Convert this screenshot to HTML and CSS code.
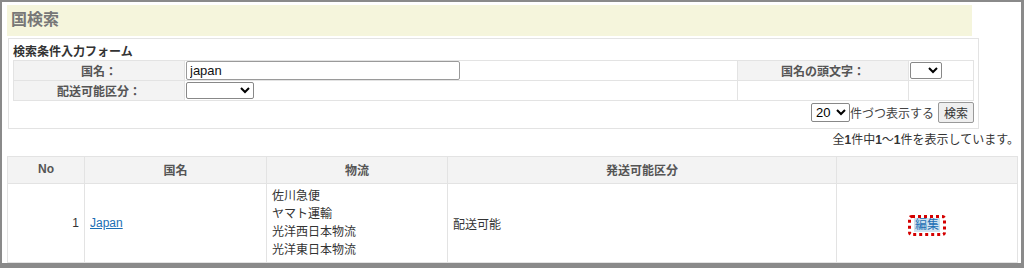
FILE: index.html
```html
<!DOCTYPE html>
<html>
	<head>
		<meta charset="utf-8">
		<title>国検索</title>
		<link rel="stylesheet" href="styles.css">
	</head>
	<body>
		<div id="frame">
			<h1 class="title">国検索</h1>
			<div class="search">
				<p class="caption">検索条件入力フォーム</p>
				<table class="form">
					<tr>
						<th class="label">国名：</th>
						<td class="field"><input type="text" class="name" value="japan"></td>
						<th class="label2">国名の頭文字：</th>
						<td class="field2"><select class="initial"><option></option></select></td>
					</tr>
					<tr>
						<th class="label">配送可能区分：</th>
						<td class="field"><select class="kind"><option></option></select></td>
						<td></td>
						<td></td>
					</tr>
				</table>
				<div class="paging">
					<select class="count"><option>20</option></select><span>件づつ表示する</span><button>検索</button>
				</div>
			</div>
			<p class="summary">全<b>1</b>件中<b>1</b>〜<b>1</b>件を表示しています。</p>
			<table class="result">
				<tr>
					<th class="c-no">No</th>
					<th class="c-name">国名</th>
					<th class="c-dist">物流</th>
					<th class="c-kind">発送可能区分</th>
					<th></th>
				</tr>
				<tr>
					<td class="num">1</td>
					<td><a href="#">Japan</a></td>
					<td class="dist">
						<p>佐川急便</p>
						<p>ヤマト運輸</p>
						<p>光洋西日本物流</p>
						<p>光洋東日本物流</p>
					</td>
					<td>配送可能</td>
					<td class="edit"><a href="#" class="btn-edit"><span>編集</span></a></td>
				</tr>
			</table>
		</div>
	</body>
</html>
```

FILE: styles.css
```css
html,body,p,h1,table{margin: 0; padding: 0;}
body{
	font-family: "Liberation Sans", "Noto Sans CJK JP", sans-serif;
	font-size: 12px;
	color: #333;
	background: #fff;
}
#frame{
	box-sizing: border-box;
	width: 1024px;
	height: 268px;
	border-style: solid;
	border-color: #8a8a8a;
	border-width: 2px 3px 5px 2px;
	padding: 3px 3px 0 5px;
	overflow: hidden;
}
.title{
	width: 965px;
	height: 31px;
	line-height: 30px;
	background: #f5f5dc;
	color: #777;
	font-size: 16px;
	padding-left: 4px;
	box-sizing: border-box;
}
.search{
	box-sizing: border-box;
	width: 971px;
	height: 91px;
	margin: 2px 0 0 1px;
	border: 1px solid #e3e3e3;
	padding: 5px 5px 0 4px;
}
.caption{
	font-weight: bold;
	font-size: 12px;
	height: 16px;
	line-height: 16px;
}
.form{
	width: 961px;
	border-collapse: collapse;
}
.form th,.form td{
	border: 1px solid #e3e3e3;
	padding: 0;
	height: 19px;
}
.form th{
	background: #f3f3f3;
	color: #555;
	font-weight: bold;
}
.label{width: 170px;}
.label2{width: 170px;}
.field2{width: 64px;}
.name{
	box-sizing: border-box;
	width: 274px;
	height: 19px;
	margin: 0 0 0 1px;
	padding: 0 3px;
	font: 13px "Liberation Sans", sans-serif;
	color: #111;
	border: 1px solid #9a9a9a;
	border-radius: 2px;
	vertical-align: middle;
}
select{
	box-sizing: border-box;
	height: 17px;
	margin: 0 0 0 1px;
	font: 13px "Liberation Sans", sans-serif;
	border: 1px solid #888;
	border-radius: 2px;
	background: #fff;
	vertical-align: middle;
}
.kind{width: 68px;}
.initial{width: 32px;}
.paging{
	width: 961px;
	display: flex;
	justify-content: flex-end;
	align-items: center;
	height: 23px;
	font-size: 12px;
	color: #444;
}
.paging .count{
	width: 39px;
	height: 19px;
	margin: 0;
	padding: 0;
}
.paging button{
	box-sizing: border-box;
	height: 21px;
	margin-left: 4px;
	padding: 0 5px;
	font: 12px "Liberation Sans", "Noto Sans CJK JP", sans-serif;
	color: #333;
	background: #efefef;
	border: 1px solid #999;
	border-radius: 2px;
}
.summary{
	text-align: right;
	width: 1012px;
	height: 27px;
	line-height: 23px;
	font-size: 12px;
}
.result{
	width: 1011px;
	border-collapse: collapse;
}
.result th,.result td{
	border: 1px solid #e3e3e3;
	padding: 0 5px;
}
.result th{
	height: 24px;
	background: #f3f3f3;
	color: #555;
	font-weight: bold;
	padding-bottom: 2px;
}
.result td{height: 78px;}
.c-no{width: 66px;}
.c-name{width: 171px;}
.c-dist{width: 170px;}
.c-kind{width: 378px;}
.num{text-align: right;}
.result a{
	color: #1b6fb5;
}
.dist p{
	line-height: 18px;
}
.edit{text-align: center;}
.btn-edit{
	display: inline-block;
	margin-top: 5px;
	text-decoration: none;
	color: #2f7bb3;
	padding: 1px 3px;
	border: 3px dotted #d40000;
	border-radius: 4px;
	line-height: 13px;
}
.btn-edit span{
	background: #cfe2ef;
	padding: 0 1px;
}
```
